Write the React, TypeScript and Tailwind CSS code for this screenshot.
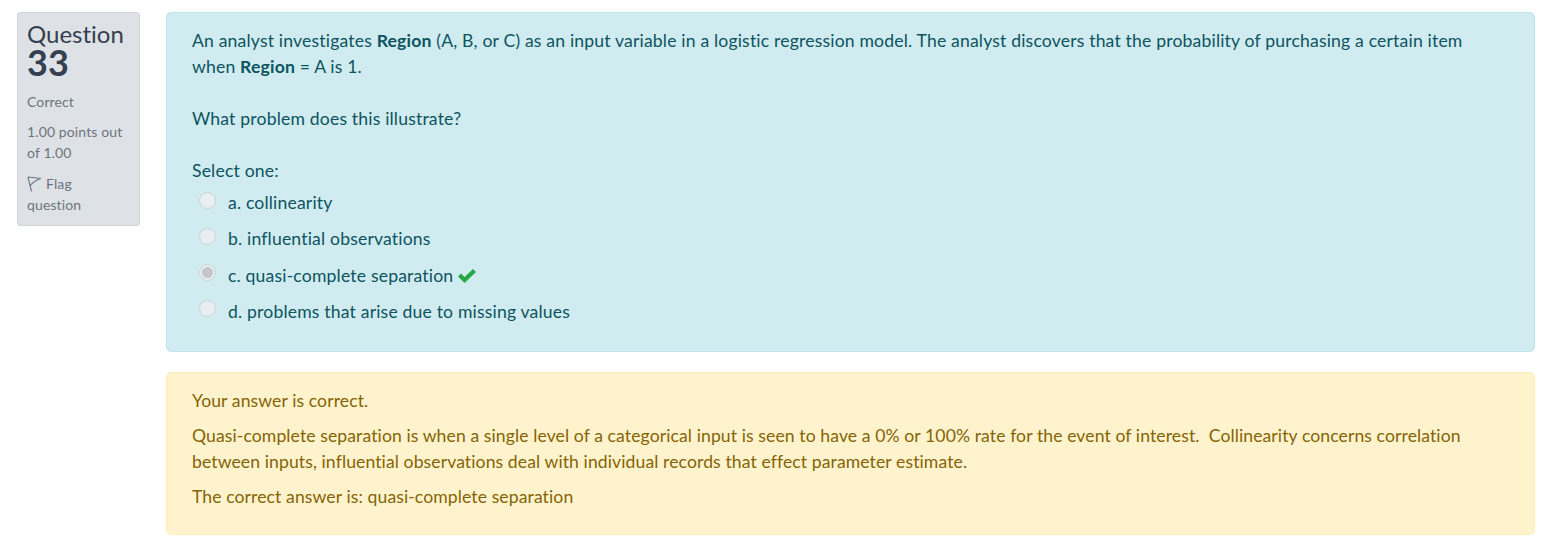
import React from 'react';

const OPTIONS = [
  { label: 'a. collinearity', checked: false, correct: false },
  { label: 'b. influential observations', checked: false, correct: false },
  { label: 'c. quasi-complete separation', checked: true, correct: true },
  { label: 'd. problems that arise due to missing values', checked: false, correct: false },
];

function FlagIcon() {
  return (
    <svg viewBox="0 0 14 16" className="w-[14px] h-[16px] shrink-0" fill="none" stroke="#6c757d" strokeWidth="1.1">
      <path d="M1 1 L4.5 15.5" />
      <path d="M1 1 L13.5 2.5 L7.5 5.5 L3 9.5" />
    </svg>
  );
}

function CheckIcon() {
  return (
    <svg viewBox="0 0 18 14" className="w-[18px] h-[14px] ml-[5px]" fill="#28a745">
      <path d="M6.6 14 L0 7.4 L3 4.4 L6.6 8 L15 0 L18 3 Z" />
    </svg>
  );
}

function Radio({ checked }: { checked: boolean }) {
  return (
    <span className="w-[17px] h-[17px] rounded-full bg-[#e9eef1] border border-[#c9d3d7] flex items-center justify-center shrink-0 -mt-[6px]">
      {checked && <span className="w-[11px] h-[11px] rounded-full bg-[#c3c7cb]" />}
    </span>
  );
}

export default function App() {
  return (
    <div className="bg-white w-[1541px] h-[545px] overflow-hidden pt-3 pl-[17px] pr-[6px] flex gap-[26px] items-start font-['Lato','Noto_Sans',sans-serif] text-[17.6px] leading-[26px] tracking-[0.17px] [font-variant-ligatures:none]">
      <div className="w-[123px] h-[214px] shrink-0 bg-[#dee2e6] border border-[#d1d5da] rounded-[3px] pl-[9px] pt-[7px] text-[#6c757d] text-[14px] leading-[21px] tracking-[0.12px]">
        <h3 className="text-[#343f4f] text-[24px] leading-[28px] font-normal tracking-normal">Question</h3>
        <div className="text-[#343f4f] text-[36px] leading-[28px] font-bold mb-[15px]">33</div>
        <div className="mb-[9px]">Correct</div>
        <div className="mb-[10px]">
          1.00 points out
          <br />
          of 1.00
        </div>
        <div>
          <span className="inline-flex items-center gap-[5px] align-top"><FlagIcon />Flag</span>
          <br />
          question
        </div>
      </div>

      <div className="flex-1 flex flex-col gap-5">
        <div className="h-[340px] bg-[#d1ecf1] border border-[#bee5eb] rounded-[5px] pl-[25px] pt-[15px] text-[#0c5460]">
          <p>
            An analyst investigates <b>Region</b> (A, B, or C) as an input variable in a logistic regression model. The analyst discovers that the probability of purchasing a certain item
            <br />
            when <b>Region</b> = A is 1.
          </p>
          <p className="mt-[26px]">What problem does this illustrate?</p>
          <p className="mt-[26px]">Select one:</p>
          <div className="mt-[6px] flex flex-col gap-[10.3px]">
            {OPTIONS.map(o => (
              <div key={o.label} className="flex items-center pl-[7px] gap-[12px]">
                <Radio checked={o.checked} />
                <span className="flex items-center">
                  {o.label}
                  {o.correct && <CheckIcon />}
                </span>
              </div>
            ))}
          </div>
        </div>

        <div className="h-[163px] bg-[#fff3cd] border border-[#ffeeba] rounded-[5px] pl-[25px] pt-[15px] text-[#856404] tracking-[0.09px]">
          <p className="mb-[9px]">Your answer is correct.</p>
          <p className="mb-[9px]">
            Quasi-complete separation is when a single level of a categorical input is seen to have a 0% or 100% rate for the event of interest.&nbsp; Collinearity concerns correlation
            <br />
            between inputs, influential observations deal with individual records that effect parameter estimate.
          </p>
          <p>The correct answer is: quasi-complete separation</p>
        </div>
      </div>
    </div>
  );
}
